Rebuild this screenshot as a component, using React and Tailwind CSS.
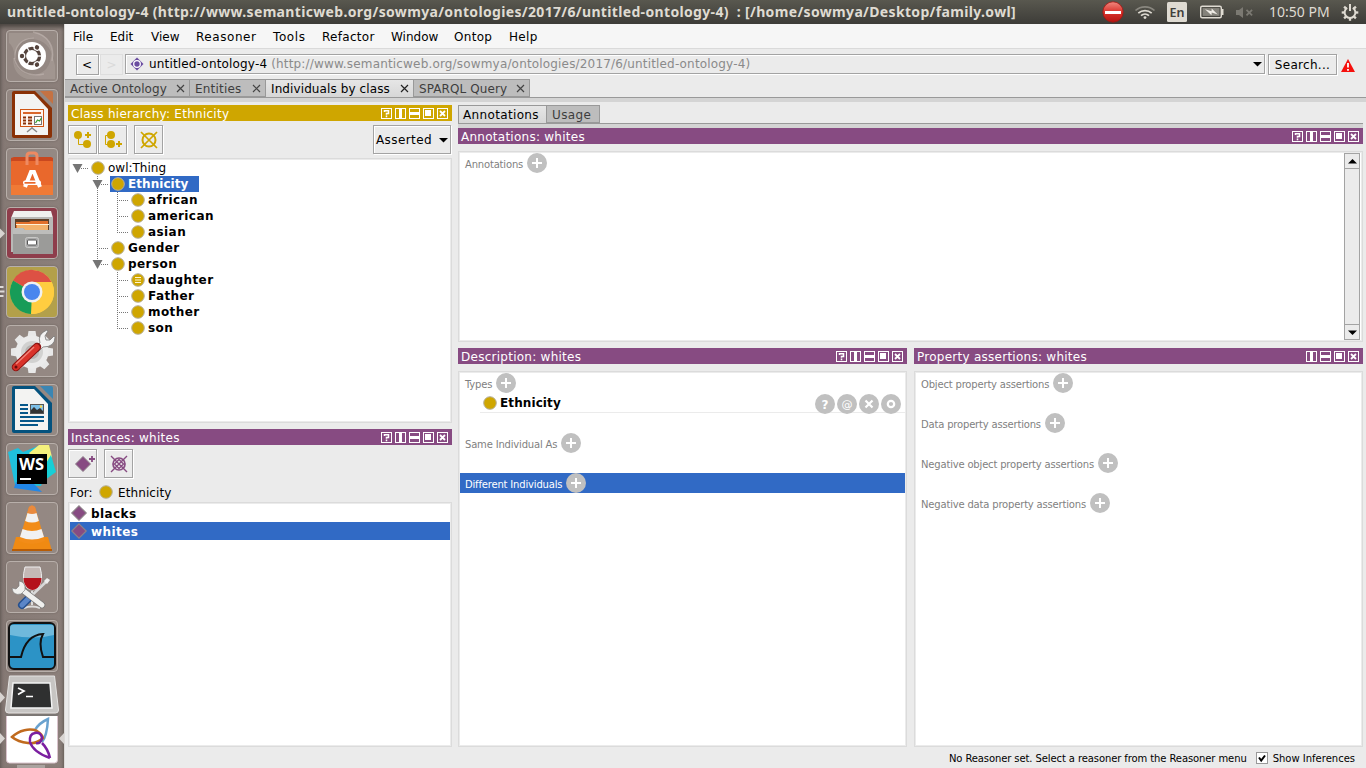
import React from "react";

const GOLD = "#cfa600";
const PURPLE = "#874b82";

/* ---------- top bar ---------- */

function TopBar() {
  return (
    <div className="flex h-6 shrink-0 items-center bg-linear-to-b from-[#59584f] to-[#3d3c38] font-['Noto_Sans',sans-serif] text-[#dfdbd2]">
      <div className="w-[1090px] pl-[7px] text-[14px] leading-6 font-bold tracking-[0.34px] whitespace-pre">
        untitled-ontology-4 (http://www.semanticweb.org/sowmya/ontologies/2017/6/untitled-ontology-4)  : [/home/sowmya/Desktop/family.owl]
      </div>
      <svg width="176" height="24" className="shrink-0">
        <defs>
          <linearGradient id="stop" x1="0" y1="0" x2="0" y2="1">
            <stop offset="0" stopColor="#f08a80" />
            <stop offset="0.5" stopColor="#d9332c" />
            <stop offset="1" stopColor="#b5120f" />
          </linearGradient>
        </defs>
        <circle cx="23" cy="12" r="10.2" fill="url(#stop)" stroke="#a51512" strokeWidth="0.8" />
        <rect x="15" y="11" width="16" height="3" fill="#fff" />
        <g fill="none" strokeWidth="1.7">
          <path d="M45.5 10.5a14 14 0 0 1 19 0" stroke="#89877f" />
          <path d="M48.3 13.2a10 10 0 0 1 13.4 0" stroke="#dfdbd2" />
          <path d="M51 15.6a6 6 0 0 1 8 0" stroke="#dfdbd2" />
        </g>
        <circle cx="55" cy="17.6" r="1.4" fill="#dfdbd2" />
        <rect x="77" y="2" width="20" height="20" rx="1.5" fill="#dfdbd2" />
        <text x="87" y="16.6" textAnchor="middle" fontSize="12.5" fontFamily="Noto Sans, sans-serif" fontWeight="600" fill="#3f3e3a">En</text>
        <rect x="110.7" y="6.2" width="20.6" height="11.6" rx="1.5" fill="none" stroke="#dfdbd2" strokeWidth="1.4" />
        <rect x="112.6" y="8.1" width="16.8" height="7.8" fill="#85837b" />
        <path d="M132 9h1.5v6h-1.5z" fill="#dfdbd2" />
        <path d="M115 9.3l6.5 2 .2-2.8 6 6-6-2-.2 2.800z" fill="#f0ede6" />
        <path d="M146 10h3l4-3v11l-4-3h-3z" fill="#7b7972" />
        <path d="M156.500 9.800l5.600 5.600M162.100 9.800l-5.600 5.600" stroke="#7b7972" strokeWidth="1.800" />
      </svg>
      <div className="w-[74px] pl-[3px] text-[14px] leading-6 whitespace-pre">10:50 PM</div>
      <svg width="20" height="24" className="shrink-0">
        <g stroke="#dfdbd2" fill="none" strokeWidth="2" transform="translate(10 12.500)">
          <path d="M-2.800 -4.600a5.400 5.400 0 1 0 5.600 0" />
          <path d="M0 -8.500v7" />
          {[45, 90, 135, 180, 225, 270, 315].map((a) => (
            <path key={a} d="M0 -5.500v-2.800" transform={`rotate(${a})`} strokeWidth="2.300" />
          ))}
        </g>
      </svg>
    </div>
  );
}

/* ---------- launcher ---------- */

function Tile({ tint = "bg-[#988d88]/70", marks, children }) {
  return (
    <div className="flex w-16 shrink-0 items-center">
      <svg width="6" height="20" className="shrink-0">
        {marks === 1 && <path d="M0 5.500L5 10.500L0 15.500z" fill="#d8d4d1" />}
        {marks === 3 && <path d="M0 5h3.500M0 9.500h4.500M0 14h3.500" stroke="#dedad7" strokeWidth="2.200" />}
      </svg>
      <div className={"flex h-[52px] w-[52px] items-center justify-center rounded-[4px] border border-[#b8afaa] shadow-[0_0_2px_#6c625d] " + tint}>
        <svg width="50" height="50" viewBox="0 0 50 50">{children}</svg>
      </div>
    </div>
  );
}

function Ubuntu() {
  return (
    <>
      <path d="M2 2h30q14 6 14 26-3-18-20-20-16 0-18 18Q6 14 2 12z" fill="#b9aea8" fillOpacity=".35" />
      <path d="M48 48H20Q6 44 6 27q5 17 20 17 18-2 18-22 4 10 4 14z" fill="#b9aea8" fillOpacity=".35" />
      <g fill="none" stroke="#cbc2bd" strokeOpacity=".45">
        <path d="M8 28C7 16 14 7 27 7" strokeWidth="1.200" />
        <path d="M26 1c15 3 22 14 19 29" strokeWidth="1.500" />
        <path d="M7 27c4 14 15 19 30 16" strokeWidth="1.500" />
      </g>
      <circle cx="25" cy="25" r="14" fill="#fff" />
      <circle cx="25" cy="25" r="7.600" fill="none" stroke="#54433c" strokeWidth="3.300" />
      {[60, 180, 300].map((a) => (
        <g key={a} transform={`rotate(${a} 25 25)`}>
          <circle cx="35" cy="25" r="3.400" fill="#fff" />
          <circle cx="35" cy="25" r="2.200" fill="#54433c" />
          <path d="M25 25L14 25" stroke="#fff" strokeWidth="1.300" />
        </g>
      ))}
      <circle cx="25" cy="25" r="5" fill="#fff" />
    </>
  );
}

function Doc({ dark, light, children }) {
  return (
    <>
      <path d="M7 1h21l17 17v28a2 2 0 0 1-2 2H7a2 2 0 0 1-2-2V3a2 2 0 0 1 2-2z" fill={dark} />
      <path d="M33 1h11a2 2 0 0 1 2 2v11z" fill={light} />
      <path d="M8 4h19l14 15v26H8z" fill="#f3f3f2" />
      {children}
    </>
  );
}

function Impress() {
  return (
    <Doc dark="#8a3106" light="#c47243">
      <rect x="13.500" y="19.500" width="23" height="17" fill="#fff6ee" stroke="#cf5514" />
      <path d="M16 23h18" stroke="#d9672a" strokeWidth="2" />
      <path d="M16 27.500h3M16 30.500h3M16 33.500h3M21 27.500h4M21 30.500h4M21 33.500h4" stroke="#8a3106" strokeWidth="2" />
      <rect x="27.500" y="26.500" width="7" height="8" fill="#fff" stroke="#777" />
      <path d="M28.500 33l2-3 2 1 2-3" stroke="#37a02f" fill="none" strokeWidth="1.300" />
      <path d="M25 37v2M20 42l5-4 5 4" stroke="#888" fill="none" strokeWidth="1.500" />
    </Doc>
  );
}

function Writer() {
  return (
    <Doc dark="#04527e" light="#3b86b3">
      <path d="M13 20h8M13 24h8M13 28h8M13 32h24M13 36h24M13 40h18" stroke="#06578a" strokeWidth="1.900" />
      <rect x="23.500" y="19.500" width="13" height="9" fill="#7cbfe8" stroke="#555" />
      <path d="M24 28v-3l3-3 3 3 3-2 3 3v2z" fill="#333" />
      <circle cx="34" cy="21.500" r="1.200" fill="#ffd64d" />
    </Doc>
  );
}

function Software() {
  return (
    <>
      <path d="M4 9l3-1h37l2 1v4H4z" fill="#c9481f" />
      <rect x="4" y="12" width="42" height="34" rx="1" fill="#e9682c" />
      <rect x="4" y="36" width="42" height="10" fill="#f07a36" />
      <path d="M20 16V7q0-3 3-3h4q3 0 3 3v9" fill="none" stroke="#ee8a62" strokeWidth="3" />
      <path d="M18 38l6-15h3l6 15" fill="none" stroke="#fff" strokeWidth="4" />
      <rect x="16" y="31.500" width="18" height="4.500" rx="2" fill="#fff" />
      <rect x="17.500" y="33" width="11" height="1.700" fill="#e9682c" />
    </>
  );
}

function Files() {
  return (
    <>
      <path d="M7 3h37l2 7H4z" fill="#f0f0ee" />
      <path d="M4 9h42v35H4z" fill="#b9b9b7" />
      <path d="M8 11h34v12H8z" fill="#5e4028" />
      <path d="M9 14h13l2-1h17v9H9z" fill="#e2702b" />
      <path d="M10 17h31v5H10z" fill="#f3b36d" />
      <path d="M9 16.500h33" stroke="#fff1d6" />
      <path d="M6 20h10l2 2h28v24H6z" fill="#9b9b99" />
      <path d="M6 20h10l2 2h28v4H6z" fill="#bdbdbb" />
      <rect x="18.500" y="29.500" width="13" height="10" rx="2" fill="#aaa" stroke="#c9c9c7" />
      <rect x="20.500" y="32" width="9" height="5" rx="1" fill="#fff" stroke="#555" />
    </>
  );
}

function Chrome() {
  return (
    <>
      <circle cx="25" cy="25" r="22" fill="#ffcd40" />
      <path d="M25 25L6 13.500A22 22 0 0 1 44.500 15z" fill="#dd5144" />
      <path d="M25 25L6.200 13.500A22 22 0 0 0 24 47z" fill="#179c58" />
      <path d="M25 15h19.600a22 22 0 0 1-20.600 32l9.500-17z" fill="#ffcd40" />
      <circle cx="25" cy="25" r="10.500" fill="#f1f1f1" />
      <circle cx="25" cy="25" r="8" fill="#4a86ee" />
    </>
  );
}

function Settings() {
  return (
    <>
      <g transform="translate(25 26)">
        {[0, 45, 90, 135, 180, 225, 270, 315].map((a) => (
          <path key={a} transform={`rotate(${a})`} d="M-4.500 -15l1-6h7l1 6z" fill="#e8e8e8" />
        ))}
        <circle r="16.500" fill="#ebebeb" />
        <circle r="11" fill="#d1d1d0" />
        <circle r="7" fill="#b5b2b0" />
      </g>
      <path d="M28 22l5-5q-3-9 7-13l1 1-3 5 1 4 4 0 4-4 1 1q0 10-12 10l-5 5z" fill="#f2f2f2" stroke="#777" strokeWidth=".8" />
      <path d="M9 41L30 21" stroke="#8e1412" strokeWidth="8.500" strokeLinecap="round" />
      <path d="M9 41L29.500 21.500" stroke="#d93229" strokeWidth="6.500" strokeLinecap="round" />
      <path d="M9 38L27 21" stroke="#f08379" strokeWidth="1.500" />
      <circle cx="9" cy="41" r="1.500" fill="#6a0b0a" />
    </>
  );
}

function WebStorm() {
  return (
    <>
      <path d="M1 8l10-4 5 4L31 2h10l7 26-11 6-3 8-26-1z" fill="#1fc0dc" />
      <path d="M22 9l10-8h10l3 12-9 10z" fill="#f4f07c" />
      <path d="M9 38l18 2 8 8-28-4z" fill="#2187e8" />
      <path d="M36 24l8-13 5 17-11 8z" fill="#16cfd6" />
      <rect x="10" y="10" width="30" height="30" fill="#000" />
      <text x="12" y="26" fontSize="15.500" fontWeight="700" fontFamily="Open Sans, sans-serif" fill="#fff" textLength="25" lengthAdjust="spacingAndGlyphs">WS</text>
      <rect x="13" y="34" width="11" height="2" fill="#fff" />
    </>
  );
}

function Vlc() {
  return (
    <>
      <path d="M9 34h32l4 14H5z" fill="#f08a12" />
      <path d="M5 46h40v2H5z" fill="#b75c05" />
      <path d="M22 4q3-3 6 0l10 34q-13 6-26 0z" fill="#f28c18" />
      <path d="M20.500 10h9l2.400 8q-7 3-13.800 0z" fill="#f1f1f1" />
      <path d="M15.500 26q9.500 4 19 0l2.500 8q-12 5-24 0z" fill="#f1f1f1" />
      <path d="M22 4q3-3 6 0l1.700 6q-4.700 2-9.400 0z" fill="#e98a3e" />
    </>
  );
}

function Wine() {
  return (
    <>
      <path d="M18 5h15q4 14-2 21-5 4-11 0-6-7-2-21z" fill="#d9cfcc" fillOpacity=".7" stroke="#eee" />
      <path d="M16.500 16h18q0 6-4 10-5 4-10 0-4-4-4-10z" fill="#b4121c" />
      <path d="M25 29v14M17 46q8-3 16 0" stroke="#ddd" strokeWidth="2" fill="none" />
      <path d="M40 19L20 38" stroke="#d8d8d8" strokeWidth="2.500" />
      <path d="M37 19l3-3 3 2-3 4z" fill="#eee" />
      <path d="M22 36l-7 7" stroke="#25508f" strokeWidth="8" strokeLinecap="round" />
      <path d="M22 36l-7 7" stroke="#5b86c8" strokeWidth="5" strokeLinecap="round" />
      <path d="M14 27l21 16" stroke="#777" strokeWidth="6.500" strokeLinecap="round" />
      <path d="M14 27l21 16" stroke="#f0f0ee" strokeWidth="5" strokeLinecap="round" />
      <path d="M5 26q1 8 9 6l4-4q1-8-6-9l0 5-3 3z" fill="#f0f0ee" stroke="#777" strokeWidth=".6" />
    </>
  );
}

function Wireshark() {
  return (
    <>
      <rect x="2" y="2" width="46" height="46" rx="5" fill="#2c93c6" stroke="#111" strokeWidth="2" />
      <path d="M5 4h40q2 0 2 3v7q-20 5-44 0V7q0-3 2-3z" fill="#8cc9e6" fillOpacity=".7" />
      <path d="M3 36h11q5-22 22-23-5 9 0 23h11" fill="none" stroke="#111" strokeWidth="2" />
    </>
  );
}

function Terminal() {
  return (
    <svg width="64" height="41" viewBox="0 0 64 41" className="shrink-0">
      <path d="M0 17l5 5.500-5 5.500z" fill="#d8d4d1" />
      <path d="M9.500 1h45l4 34q0 3-3 3h-47q-3 0-3-3z" fill="#c7c5c3" stroke="#e4e3e2" />
      <path d="M5 36q0 3 3 3h48q3 0 3-3v2q0 3-3 3H8q-3 0-3-3z" fill="#7c7774" />
      <path d="M13 8h37l2 25H11z" fill="#2f3030" stroke="#f3f3f3" strokeWidth="1.500" />
      <path d="M18 13l6 3-6 3.500M26 21.500h7" stroke="#fff" strokeWidth="1.700" fill="none" />
    </svg>
  );
}

function Protege() {
  return (
    <svg width="64" height="52" viewBox="0 1 64 52" className="shrink-0">
      <path d="M0 18l5 5.500-5 5.500zM64 18l-5 5.500 5 5.500z" fill="#d8d4d1" />
      <rect x="6.500" y="-4" width="51" height="52" rx="3" fill="#fff" stroke="#d9c3cc" />
      <rect x="17" y="50" width="28" height="3" fill="#aaa39f" />
      <g fill="none" strokeWidth="2.500">
        <path d="M42 27q5-6 6-23-9 4-13 11" stroke="#6aa2cf" />
        <path d="M12 22C19 15 30 13 37 16q5 3 6 7-6 6-15 5-10-1-16-6z" stroke="#c06a1e" />
        <path d="M50 43Q33 37 30 27q-1-8 5-9 6-1 7 5-1 6-6 5M42 28q6 6 8 15" stroke="#7b1fa0" />
      </g>
    </svg>
  );
}

function Launcher() {
  return (
    <div className="flex w-16 shrink-0 flex-col gap-[7px] overflow-hidden bg-linear-to-r from-[#857974] to-[#8c807b] pt-1.5 shadow-[inset_0_3px_4px_#4a4440]">
      <Tile><Ubuntu /></Tile>
      <Tile><Impress /></Tile>
      <Tile><Software /></Tile>
      <Tile tint="bg-[#8e3d4b]" marks={1}><Files /></Tile>
      <Tile tint="bg-[#b3a04a]" marks={3}><Chrome /></Tile>
      <Tile><Settings /></Tile>
      <Tile><Writer /></Tile>
      <Tile><WebStorm /></Tile>
      <Tile><Vlc /></Tile>
      <Tile><Wine /></Tile>
      <Tile><Wireshark /></Tile>
      <div className="-mt-1 flex flex-col">
        <Terminal />
        <Protege />
      </div>
    </div>
  );
}

/* ---------- shared parts ---------- */

function HeaderIcons({ help }) {
  return (
    <div className="flex gap-[3px]">
      {help && (
        <svg width="11" height="11">
          <rect x=".5" y=".5" width="10" height="10" fill="none" stroke="#fff" />
          <path d="M3.500 4V2.800h4v2.700h-2v1.300M5.500 7.500v1.700" stroke="#fff" strokeWidth="1.500" fill="none" />
        </svg>
      )}
      <svg width="11" height="11">
        <rect x=".5" y=".5" width="10" height="10" fill="none" stroke="#fff" />
        <rect x="4" y="0" width="3" height="11" fill="#fff" />
      </svg>
      <svg width="11" height="11">
        <rect x=".5" y=".5" width="10" height="10" fill="none" stroke="#fff" />
        <rect x="0" y="4" width="11" height="3" fill="#fff" />
      </svg>
      <svg width="11" height="11">
        <rect x=".5" y=".5" width="10" height="10" fill="none" stroke="#fff" />
        <rect x="2" y="2" width="6" height="6" fill="#fff" />
      </svg>
      <svg width="11" height="11">
        <rect x=".5" y=".5" width="10" height="10" fill="none" stroke="#fff" />
        <path d="M3 3l5 5M8 3l-5 5" stroke="#fff" strokeWidth="1.800" />
      </svg>
    </div>
  );
}

function Header({ title, help = true, tone = "bg-[#874b82]" }) {
  return (
    <div className={"flex h-4 shrink-0 items-center justify-between pr-1 pl-[3px] text-white " + tone}>
      <span className="pt-[2px] text-[12px] leading-4 tracking-[0.26px]">{title}</span>
      <HeaderIcons help={help} />
    </div>
  );
}

function ToolButton({ children }) {
  return (
    <div className="flex h-[29px] w-[29px] items-center justify-center border border-[#a3a3a3] shadow-[1px_1px_0_#fff,inset_1px_1px_0_#fff]">
      <svg width="27" height="27">{children}</svg>
    </div>
  );
}

function Box({ className, children }) {
  return (
    <div className={"flex flex-col border border-[#dbdbdb] bg-white p-px shadow-[inset_0_0_0_1px_#ebebeb] " + className}>
      {children}
    </div>
  );
}

function ClassDot({ equiv }) {
  return (
    <svg width="16" height="16" className="shrink-0">
      <circle cx="8" cy="8" r="6.300" fill={GOLD} stroke="#b5b0a0" strokeWidth="1" />
      {equiv && <path d="M5 5.500h6M5 8h6M5 10.500h6" stroke="#fff6d0" />}
    </svg>
  );
}

function Diamond() {
  return (
    <svg width="18" height="18" className="shrink-0">
      <path d="M9 1.800L16.200 9 9 16.200 1.800 9z" fill={PURPLE} stroke="#8d8088" strokeWidth="1.200" />
    </svg>
  );
}

function Round({ children }) {
  return (
    <svg width="20" height="20" className="shrink-0">
      <circle cx="10" cy="10" r="10" fill="#c0c0c0" />
      {children}
    </svg>
  );
}

function Add() {
  return (
    <Round>
      <path d="M5 10h10M10 5v10" stroke="#fff" strokeWidth="2" />
    </Round>
  );
}

function Section({ label, selected }) {
  return (
    <div className={"flex h-5 shrink-0 gap-1 pl-[5px] text-[10px] tracking-[-0.18px] " + (selected ? "bg-[#316ac5] text-white" : "text-[#7f7f7f]")}>
      <span className="pt-[6px] leading-3">{label}</span>
      <Add />
    </div>
  );
}

function Tab({ label, active, closable, className }) {
  return (
    <div
      className={
        "flex justify-between border-t border-r border-[#999] text-[12px] leading-[19px] whitespace-nowrap " +
        (active ? "bg-linear-to-b from-[#e6e6e6] to-[#d6d6d6] text-black " : "border-b bg-[#bdbdbd] text-[#3d3d3d] ") +
        className
      }
    >
      <span className="h-4">{label}</span>
      {closable && (
        <svg width="9" height="17" className="mr-[4px]">
          <path d="M1 5l7 7M8 5l-7 7" stroke={active ? "#222" : "#444"} strokeWidth="1.200" />
        </svg>
      )}
    </div>
  );
}

/* ---------- class tree ---------- */

const TREE = [
  { label: "owl:Thing", level: 0, open: true, plain: true },
  { label: "Ethnicity", level: 1, open: true, selected: true },
  { label: "african", level: 2, outer: true },
  { label: "american", level: 2, outer: true },
  { label: "asian", level: 2, outer: true, last: true },
  { label: "Gender", level: 1 },
  { label: "person", level: 1, open: true, last: true },
  { label: "daughter", level: 2, equiv: true },
  { label: "Father", level: 2 },
  { label: "mother", level: 2 },
  { label: "son", level: 2, last: true },
];

function TreeRow({ label, level, open, plain, selected, outer, last, equiv }) {
  const x = 7 + level * 20;
  const w = 20 + level * 20;
  const trunk = level === 2 ? 47.5 : 27.5;
  return (
    <div className="flex h-4 shrink-0">
      <svg width={w} height="16" className="shrink-0">
        <g stroke="#777" strokeDasharray="1 1" fill="none">
          {outer && <path d="M27.500 0V16" />}
          {level > 0 && <path d={`M${trunk} 0V${last ? 9 : 16}`} />}
          {level === 2 ? <path d="M47 8.500H59" /> : <path d={`M${x} 8.500H${w - 1}`} />}
        </g>
        {open && <path d={`M${x - 4.5} 4h10l-5 9z`} fill="#757575" />}
      </svg>
      <div className={"flex h-4 gap-[2px] " + (selected ? "w-[89px] bg-[#316ac5] text-white" : "")}>
        <ClassDot equiv={equiv} />
        <span
          className={
            "h-4 text-[12px] leading-[17px] " +
            (plain ? "" : selected ? "font-bold tracking-[0.05px]" : "font-bold tracking-[0.42px]")
          }
        >
          {label}
        </span>
      </div>
    </div>
  );
}

function LeftColumn() {
  return (
    <div className="flex w-[384px] shrink-0 flex-col">
      <Header title="Class hierarchy: Ethnicity" tone="bg-[#cfa600]" />
      <div className="mt-1 flex h-[29px]">
        <ToolButton>
          <g fill={GOLD}>
            <circle cx="9" cy="9" r="4" />
            <circle cx="18" cy="18" r="4" />
            <path d="M18 6h2v2h2v2h-2v2h-2v-2h-2V8h2z" />
          </g>
          <path d="M9.500 9v9.500H18" stroke={GOLD} fill="none" />
        </ToolButton>
        <div className="ml-px flex">
          <ToolButton>
            <g fill={GOLD}>
              <circle cx="12" cy="9" r="4" />
              <circle cx="12" cy="18" r="4" />
              <path d="M19 15h2v2h2v2h-2v2h-2v-2h-2v-2h2z" />
            </g>
            <path d="M12 9.500H6.500V18.500H12" stroke={GOLD} fill="none" />
          </ToolButton>
        </div>
        <div className="ml-[7px] flex">
          <ToolButton>
            <g stroke={GOLD} fill="none" strokeWidth="2">
              <circle cx="14" cy="14" r="6.500" />
              <path d="M6 6l16 16M22 6L6 22" strokeWidth="1.700" />
            </g>
          </ToolButton>
        </div>
        <div className="mr-px ml-auto flex w-[78px] items-center justify-between border border-[#a3a3a3] pr-[2px] pl-[2px] text-[12px] tracking-[0.4px] shadow-[1px_1px_0_#fff,inset_1px_1px_0_#fff]">
          <span className="leading-4">Asserted</span>
          <svg width="9" height="6"><path d="M0 1h9L4.500 5.500z" /></svg>
        </div>
      </div>
      <Box className="mt-1 h-[265px]">
        {TREE.map((n) => (
          <TreeRow key={n.label} {...n} />
        ))}
      </Box>
      <div className="mt-1.5 flex flex-col">
        <Header title="Instances: whites" />
      </div>
      <div className="mt-1 flex h-[29px] gap-[7px]">
        <ToolButton>
          <path d="M14 6.500L21.500 14 14 21.500 6.500 14z" fill={PURPLE} stroke="#8d8088" />
          <path d="M20 9h6M23 6v6" stroke={PURPLE} strokeWidth="1.800" />
        </ToolButton>
        <ToolButton>
          <g stroke={PURPLE} fill="none" strokeWidth="1.700">
            <circle cx="14" cy="14" r="6" />
            <path d="M6 6l16 16M22 6L6 22M14 9.500l4.500 4.500-4.500 4.500L9.500 14z" strokeWidth="1.400" />
          </g>
        </ToolButton>
      </div>
      <div className="mt-1.5 flex h-4 items-center pl-[2px] text-[12px] leading-4">
        <span className="w-7 pt-[2px]">For:</span>
        <ClassDot />
        <span className="ml-[4px] pt-[2px] tracking-[0.1px]">Ethnicity</span>
      </div>
      <Box className="mt-[2px] h-[245px] text-[12px] leading-4 font-bold tracking-[0.42px]">
        <div className="flex h-[18px] items-center gap-[3px]">
          <Diamond />
          <span className="pt-px">blacks</span>
        </div>
        <div className="flex h-[18px] items-center gap-[3px] bg-[#316ac5] text-white">
          <Diamond />
          <span className="pt-px">whites</span>
        </div>
      </Box>
    </div>
  );
}

/* ---------- right side ---------- */

function ScrollBar() {
  return (
    <div className="flex w-4 flex-col border border-[#a3a3a3] bg-[#ebebeb]">
      <svg width="14" height="14"><path d="M3 9.500h9L7.500 5z" /></svg>
      <div className="grow border-y border-[#a3a3a3]" />
      <svg width="14" height="14"><path d="M3 5.500h9L7.500 10z" /></svg>
    </div>
  );
}

function RightColumn() {
  return (
    <div className="ml-1.5 flex w-[905px] shrink-0 flex-col">
      <div className="flex h-[18px]">
        <Tab label="Annotations" active className="h-[19px] w-[89px] border-l pl-[4px] tracking-[0.35px]" />
        <Tab label="Usage" className="w-[53px] pl-[5px] tracking-[0.4px]" />
      </div>
      <div className="h-[5px] border-t border-[#999] bg-[#d4d4d4]" />
      <Header title="Annotations: whites" />
      <Box className="mt-[7px] h-[191px]">
        <div className="flex grow justify-between">
          <Section label="Annotations" />
          <div className="mr-px flex">
            <ScrollBar />
          </div>
        </div>
      </Box>
      <div className="mt-1.5 flex gap-[7px]">
        <div className="flex w-[449px] flex-col">
          <Header title="Description: whites" />
          <Box className="mt-[7px] h-[376px]">
            <Section label="Types" />
            <div className="ml-5 flex h-5 justify-between border-b border-[#ebebeb]">
              <div className="flex gap-[2px] pl-[2px]">
                <div className="pt-[2px]"><ClassDot /></div>
                <span className="pt-px text-[12px] leading-[18px] font-bold tracking-[0.1px]">Ethnicity</span>
              </div>
              <div className="mr-1 flex gap-[2px] pt-px">
                <Round>
                  <text x="10" y="15" textAnchor="middle" fontSize="12" fontWeight="700" fontFamily="DejaVu Sans, sans-serif" fill="#fff">?</text>
                </Round>
                <Round>
                  <text x="10" y="13.500" textAnchor="middle" fontSize="11" fontFamily="DejaVu Sans, sans-serif" fill="#fff">@</text>
                </Round>
                <Round>
                  <path d="M6.500 6.500l7 7M13.500 6.500l-7 7" stroke="#fff" strokeWidth="2.200" />
                </Round>
                <Round>
                  <circle cx="10" cy="10" r="3.200" fill="none" stroke="#fff" strokeWidth="2.200" />
                </Round>
              </div>
            </div>
            <div className="h-5 shrink-0" />
            <Section label="Same Individual As" />
            <div className="h-5 shrink-0" />
            <Section label="Different Individuals" selected />
          </Box>
        </div>
        <div className="flex w-[449px] flex-col">
          <Header title="Property assertions: whites" help={false} />
          <Box className="mt-[7px] h-[376px]">
            <div className="flex flex-col gap-5">
              <Section label="Object property assertions" />
              <Section label="Data property assertions" />
              <Section label="Negative object property assertions" />
              <Section label="Negative data property assertions" />
            </div>
          </Box>
        </div>
      </div>
    </div>
  );
}

/* ---------- window ---------- */

const MENU = [
  ["File", "w-[37px]"],
  ["Edit", "w-[41px]"],
  ["View", "w-[45px]"],
  ["Reasoner", "w-[77px] tracking-[0.55px]"],
  ["Tools", "w-[49px] tracking-[0.6px]"],
  ["Refactor", "w-[69px] tracking-[0.3px]"],
  ["Window", "w-[63px]"],
  ["Ontop", "w-[55px] tracking-[0.3px]"],
  ["Help", "w-[40px] tracking-[0.3px]"],
];

function MenuBar() {
  return (
    <div className="flex h-[25px] shrink-0 border-b border-[#dadada] bg-[#f6f6f6] pl-[8px] text-[12px] leading-[27px]">
      {MENU.map(([label, box]) => (
        <span key={label} className={"h-6 shrink-0 " + box}>{label}</span>
      ))}
    </div>
  );
}

function AddressBar() {
  return (
    <div className="flex h-[30px] shrink-0 items-start pt-[5px] pl-[11px] text-[12px]">
      <div className="flex h-[21px] w-[23px] items-center justify-center border border-[#a3a3a3] pr-px shadow-[1px_1px_0_#fff,inset_1px_1px_0_#fff]">&lt;</div>
      <div className="ml-px flex h-[21px] w-[23px] items-center justify-center border border-[#dedede] text-[#dadada]">&gt;</div>
      <div className="ml-[2px] flex h-5 w-[1140px] items-center border border-[#a3a3a3] pr-[2px] pl-1 tracking-[0.17px] shadow-[1px_1px_0_#fff,inset_1px_1px_0_#fff]">
        <svg width="15" height="15" className="mr-1 shrink-0">
          <path d="M7 .5L13.500 7 7 13.500 .5 7z" fill="#6a4ca0" />
          <circle cx="7" cy="7" r="3.300" fill="#6a4ca0" stroke="#fff" strokeWidth="1.300" />
        </svg>
        <span className="whitespace-pre">untitled-ontology-4 <span className="text-[#8a8a8a]">(http://www.semanticweb.org/sowmya/ontologies/2017/6/untitled-ontology-4)</span></span>
        <svg width="9" height="6" className="ml-auto"><path d="M0 1h9L4.500 5.500z" /></svg>
      </div>
      <div className="ml-[3px] flex h-[21px] w-[69px] items-center justify-center border border-[#a3a3a3] tracking-[0.3px] shadow-[1px_1px_0_#fff,inset_1px_1px_0_#fff]">Search...</div>
      <svg width="14" height="13" className="mt-[5px] ml-1">
        <path d="M7 0L14 13H0z" fill="#f5100d" />
        <path d="M7 4v4.500M7 10v1.800" stroke="#fff" strokeWidth="1.800" />
      </svg>
    </div>
  );
}

export default function App() {
  return (
    <div className="flex h-[768px] w-[1366px] flex-col overflow-hidden bg-[#ebebeb] font-['DejaVu_Sans',sans-serif] text-black">
      <TopBar />
      <div className="flex h-[744px]">
        <Launcher />
        <div className="flex w-[1302px] shrink-0 flex-col border-l border-[#dcdad8]">
          <MenuBar />
          <AddressBar />
          <div className="flex h-[18px] shrink-0">
            <Tab label="Active Ontology" closable className="w-[125px] pl-[5px] tracking-[0.1px]" />
            <Tab label="Entities" closable className="w-[76px] pl-[5px] tracking-[0.2px]" />
            <Tab label="Individuals by class" active closable className="h-[19px] w-[148px] pl-[5px] tracking-[0.1px]" />
            <Tab label="SPARQL Query" closable className="w-[116px] pl-[5px] tracking-[0.1px]" />
          </div>
          <div className="h-[5px] shrink-0 border-t border-[#999] bg-[#d4d4d4]" />
          <div className="mt-[3px] flex h-[642px] pl-[3px]">
            <LeftColumn />
            <RightColumn />
          </div>
          <div className="flex grow items-center justify-end pr-[11px] text-[10px] leading-4">
            <span className="pt-[2px] tracking-[-0.1px]">No Reasoner set. Select a reasoner from the Reasoner menu</span>
            <svg width="12" height="12" className="ml-[9px]">
              <rect x=".5" y=".5" width="11" height="11" fill="#fff" stroke="#999" />
              <path d="M3 5.500l2.200 3L9 3.500" stroke="#000" strokeWidth="2" fill="none" />
            </svg>
            <span className="ml-[5px] pt-[2px]">Show Inferences</span>
          </div>
        </div>
      </div>
    </div>
  );
}
